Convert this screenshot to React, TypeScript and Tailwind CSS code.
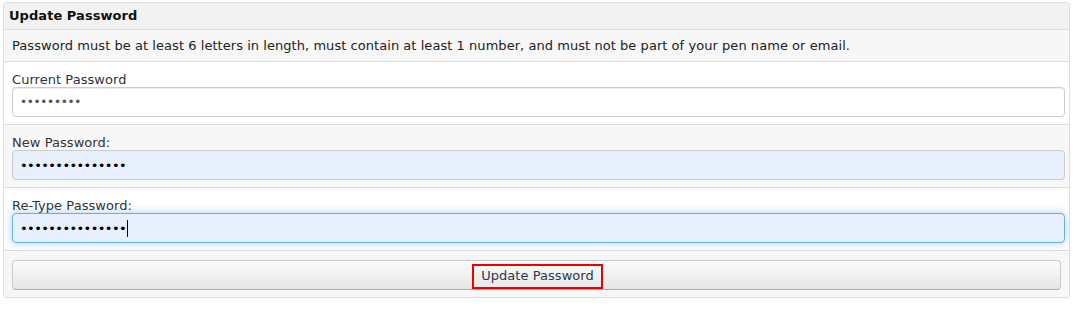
const FakeInput = ({
	dots,
	className,
	dotClass,
	caret,
}: {
	dots: number;
	className: string;
	dotClass: string;
	caret?: boolean;
}) => {
	return (
		<div
			className={
				"flex h-[30px] w-[1053px] items-center rounded-[4px] border px-[7px] " +
				className
			}
		>
			<span className={"leading-none " + dotClass}>{"•".repeat(dots)}</span>
			{caret && <span className="ml-[1px] h-[17px] w-[1px] bg-black" />}
		</div>
	);
};

const Field = ({
	label,
	children,
	shaded,
}: {
	label: string;
	children: React.ReactNode;
	shaded?: boolean;
}) => {
	return (
		<div
			className={
				"border-b border-[#dddddd] pb-[7px] pl-[8px] pt-[9px] " +
				(shaded ? "bg-[#f7f7f7]" : "bg-white")
			}
		>
			<div className="h-[16px] leading-[18px] text-[#333]">{label}</div>
			{children}
		</div>
	);
};

export default function App() {
	return (
		<div className="h-[335px] bg-white pl-[3px] pt-[2px]">
			<div
				className="w-[1067px] overflow-hidden rounded-[3px] border border-[#dddddd] text-[13px] tracking-[0.05px] text-[#222]"
				style={{ fontFamily: '"DejaVu Sans", Verdana, sans-serif' }}
			>
				<div className="flex h-[27px] items-center border-b border-[#dddddd] bg-[#f2f2f2] pl-[5px] font-bold text-[#111]">
					Update Password
				</div>
				<div className="flex h-[32px] items-center border-b border-[#dddddd] bg-[#f7f7f7] pl-[8px]">
					Password must be at least 6 letters in length, must contain at least 1
					number, and must not be part of your pen name or email.
				</div>

				<Field label="Current Password">
					<FakeInput
						dots={9}
						className="border-[#cccccc] bg-white shadow-[inset_0_1px_1px_rgba(0,0,0,0.075)]"
						dotClass="text-[12px] tracking-[-0.3px] text-[#555]"
					/>
				</Field>

				<Field label="New Password:" shaded>
					<FakeInput
						dots={15}
						className="border-[#cccccc] bg-[#e8f0fe]"
						dotClass="text-[13px] tracking-[-0.6px] text-black"
					/>
				</Field>

				<Field label="Re-Type Password:">
					<FakeInput
						dots={15}
						className="border-[#66afe9] bg-[#e8f0fe] shadow-[0_0_8px_rgba(102,175,233,0.6)]"
						dotClass="text-[13px] tracking-[-0.6px] text-black"
						caret
					/>
				</Field>

				<div className="bg-[#f7f7f7] pb-[7px] pl-[8px] pt-[9px]">
					<button className="flex h-[30px] w-[1049px] items-center justify-center rounded-[4px] border border-[#cccccc] border-b-[#adadad] bg-gradient-to-b from-[#fcfcfc] to-[#e6e6e6] text-[#2b3a4a]">
						<span className="ml-[2px] mt-[2px] flex h-[25px] items-center border-2 border-[#ee0000] px-[7px]">
							Update Password
						</span>
					</button>
				</div>
			</div>
		</div>
	);
}
